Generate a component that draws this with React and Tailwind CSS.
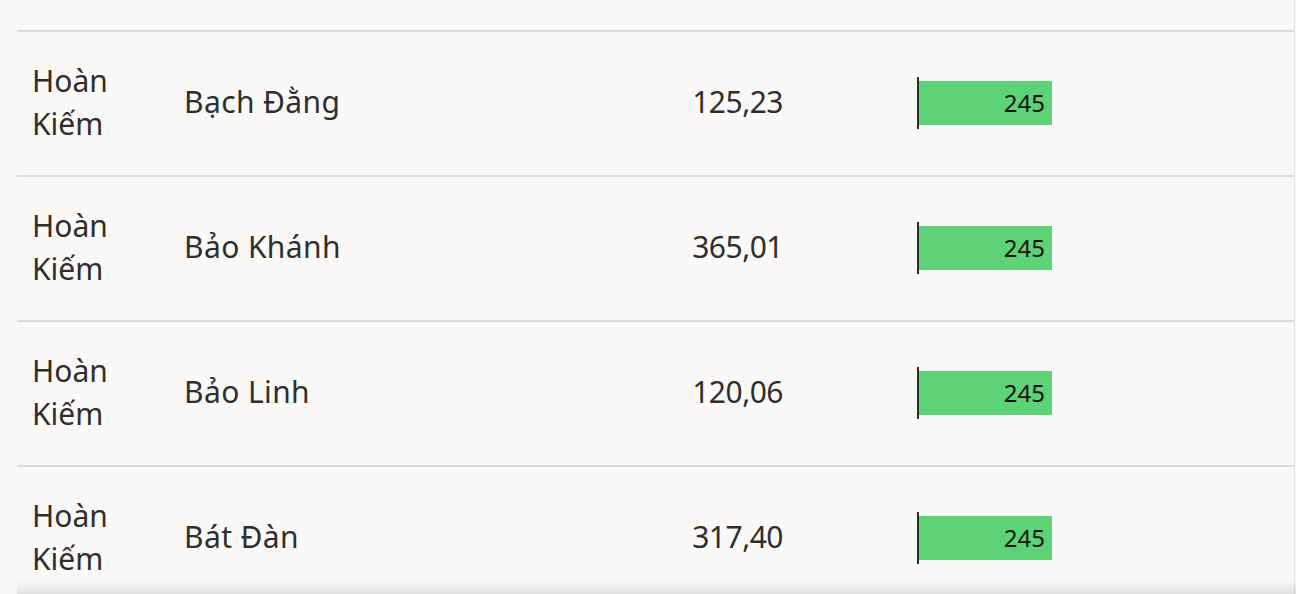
const rows = [
  { district: "Hoàn Kiếm", ward: "Bạch Đằng", area: "125,23", value: 245 },
  { district: "Hoàn Kiếm", ward: "Bảo Khánh", area: "365,01", value: 245 },
  { district: "Hoàn Kiếm", ward: "Bảo Linh", area: "120,06", value: 245 },
  { district: "Hoàn Kiếm", ward: "Bát Đàn", area: "317,40", value: 245 },
];

const Bar = ({ value }) => (
  <div className="flex h-[52px] items-center">
    <div className="h-[52px] w-[2px] bg-[#2b2b2b]" />
    <div className="flex h-[44px] w-[133px] items-center justify-end bg-[#5dd276] pr-[7px] text-[24px] text-[#141414]">
      {value}
    </div>
  </div>
);

export default function App() {
  return (
    <div className="relative h-[594px] w-[1296px] overflow-hidden bg-[#faf9f8] font-['Noto_Sans',sans-serif] text-[#2e2e2e]">
      <div className="ml-[17px] mr-px h-full border-r border-[#e4e3e2] pt-[30px]">
        {rows.map((r) => (
          <div key={r.ward} className="flex h-[145px] items-center border-t-2 border-[#dddcdb] pl-[15px] text-[30px] leading-[43px]">
            <div className="w-[152px] pb-1">
              {r.district.split(" ").map((w) => (
                <div key={w}>{w}</div>
              ))}
            </div>
            <div className="w-[400px] pb-1 tracking-[0.4px]">{r.ward}</div>
            <div className="w-[199px] pb-1 text-right tracking-[-0.5px]">{r.area}</div>
            <div className="mb-[2px] ml-[134px]">
              <Bar value={r.value} />
            </div>
          </div>
        ))}
      </div>
      <div className="absolute bottom-0 left-[17px] right-0 h-[14px] bg-gradient-to-b from-transparent to-black/10" />
    </div>
  );
}
